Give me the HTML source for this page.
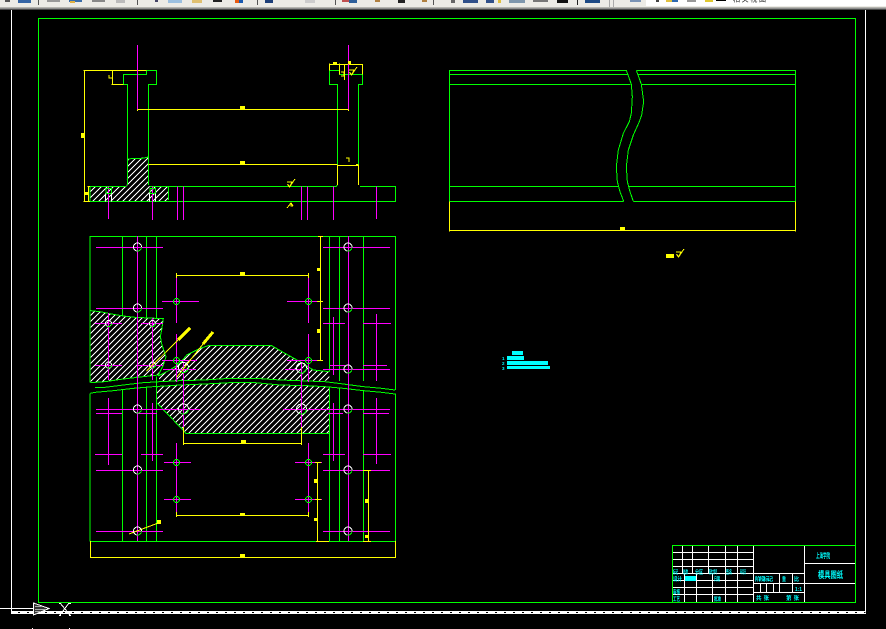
<!DOCTYPE html>
<html><head><meta charset="utf-8"><style>
html,body{margin:0;padding:0;background:#000;width:886px;height:629px;overflow:hidden}
svg{display:block;position:absolute;left:0;top:0}
.g,.y,.m,.w,.c{fill:none;stroke-width:1;shape-rendering:crispEdges}
.g{stroke:#0f0}.y{stroke:#ff0}.m{stroke:#f0f}.w{stroke:#fff}.c{stroke:#0ff}
.z *{vector-effect:non-scaling-stroke}
text{font-family:"Liberation Sans","Noto Sans CJK SC",sans-serif;font-weight:bold}
.yt{fill:#ff0;font-size:5px}
.ct{fill:#0ff;font-size:5.5px}
</style></head><body>
<svg width="886" height="629" viewBox="0 0 886 629" xmlns="http://www.w3.org/2000/svg">
<defs>
<pattern id="h" patternUnits="userSpaceOnUse" width="18" height="18"><path d="M-3 21L21 -3M-3 3L3 -3M15 21L21 15" stroke="#fff" stroke-width="3.400" fill="none" shape-rendering="crispEdges"/></pattern>
<g id="r"><path d="M0 0h5l-2.500 5-2-3M2.500 5L8 -3" fill="none" stroke="#ff0" shape-rendering="crispEdges"/></g>
</defs>
<rect width="886" height="629" fill="#000"/>

<!-- toolbar -->
<rect width="886" height="8" fill="#ecebe6"/>
<rect y="7" width="886" height="1" fill="#b5b5b0"/>
<rect y="8" width="886" height="1" fill="#8f8f8f"/>
<rect y="9" width="886" height="1" fill="#4a4a4a"/>
<rect x="646" width="240" height="6" fill="#fff"/>
<g>
<rect x="5" width="5" height="2" fill="#555"/>
<rect x="18" width="13" height="3" fill="#3565a5"/>
<rect x="38" width="1" height="5" fill="#555"/>
<rect x="47" width="13" height="2" fill="#999"/>
<rect x="69" width="13" height="2" fill="#3c6ea8"/><rect x="70" y="1" width="5" height="2" fill="#e0b040"/>
<rect x="92" width="13" height="2" fill="#888"/>
<rect x="116" width="9" height="3" fill="#bbb"/>
<rect x="137" width="1" height="5" fill="#555"/>
<rect x="155" width="3" height="2" fill="#446"/>
<rect x="168" width="14" height="3" fill="#9cc0e0"/>
<rect x="192" width="10" height="3" fill="#e0c070"/>
<rect x="213" width="9" height="2" fill="#222"/>
<rect x="235" width="4" height="3" fill="#e85a10"/><rect x="239" width="4" height="3" fill="#1a5ab0"/>
<rect x="257" width="1" height="5" fill="#555"/>
<rect x="265" width="8" height="3" fill="#1d3f78"/>
<rect x="305" width="10" height="3" fill="#ccc"/>
<rect x="335" width="1" height="5" fill="#555"/>
<rect x="342" width="7" height="2" fill="#c05050"/><rect x="349" width="8" height="3" fill="#2d5f9a"/>
<rect x="375" width="5" height="2" fill="#b08040"/>
<rect x="398" width="7" height="3" fill="#222"/>
<rect x="422" width="5" height="2" fill="#b08040"/>
<rect x="433" width="1" height="5" fill="#555"/>
<rect x="451" width="4" height="3" fill="#666"/>
<rect x="463" width="15" height="3" fill="#30508a"/>
<rect x="486" width="8" height="3" fill="#30508a"/><rect x="498" width="3" height="3" fill="#e0c040"/>
<rect x="509" width="16" height="3" fill="#7f97ad"/>
<rect x="533" width="15" height="2" fill="#777"/>
<rect x="557" width="11" height="3" fill="#111"/>
<rect x="577" width="1" height="5" fill="#222"/>
<rect x="585" width="15" height="3" fill="#1d4a85"/>
<rect x="609" width="1" height="7" fill="#aaa"/><rect x="613" width="1" height="7" fill="#aaa"/>
<rect x="630" width="11" height="2" fill="#7a93b5"/>
<rect x="656" width="3" height="2" fill="#444"/>
<rect x="666" width="6" height="2" fill="#e0c040"/><rect x="672" width="6" height="2" fill="#2f6ab0"/>
<rect x="687" width="9" height="2" fill="#999"/>
<rect x="705" width="8" height="2" fill="#e0c830"/>
<rect x="716" width="10" height="1" fill="#000"/>
<text x="733" y="1.500" font-size="7" fill="#111" textLength="33" style="font-weight:normal">相关视图</text>
</g>

<!-- frames -->
<path class="w" d="M11.500 10V612.500M865.500 10V612.500M0 608.500H33"/>
<path d="M11 611.500H866M11 613.500H866" stroke="#fff" fill="none" shape-rendering="crispEdges"/>
<path d="M11 612.500H866" stroke="#fff" stroke-dasharray="7 2" fill="none" shape-rendering="crispEdges"/>
<path class="g" d="M38.500 602.500V18.500H855.500V602.500Z"/>
<path d="M33.500 603V615L49 608.500Z" fill="#333" stroke="#fff" shape-rendering="crispEdges"/>
<path d="M35 606.500h6M35 609.500h11M35 611.500h5" stroke="#aaa" fill="none" shape-rendering="crispEdges"/>
<path class="w" d="M60 603L70 615M69 603L60 615M59 615.500h2M69 615.500h2M59 603.500h2M69 603.500h2"/>
<path class="w" d="M32 628.500h1M69 628.500h1"/>

<!-- top-left view -->
<g transform="translate(60 30) scale(.33333)">
<polygon points="203,388 217,385 265,381 268,469 325,469 325,514 90,514 90,469 200,469" fill="url(#h)"/>
<g class="z">
<path class="g" d="M203 388L217 385H247L265 381"/>
<path class="g" d="M90 469H200M270 469H828L832 465M900 469H1006V514H90V469M325 469V510"/>
<path class="g" d="M260 121H290V163H265V465M260 121V133H190V163H203V465"/>
<path class="g" d="M808 121V163H832V405M808 121H838V133H908V163H895V405"/>
<path class="y" d="M70 121H260M73 121V514M70 514H90M157 121V163M155 163H190M82 469H90M85 469V514"/>
<path class="y" d="M832 405V465M895 405V465M808 100V121M808 103H908V133M838 100V133M853 105V150"/>
<path class="y" d="M232 238H865M265 403H832M832 406H895M888 403H895M232 234V243M865 234V243"/>
<path class="m" d="M232 45V238M865 45V238M145 470V567M277 470V570M352 470V570M370 470V570M724 470V570M742 470V570M820 470V570M949 470V567"/>
<path class="g" d="M138 476H154V490H138ZM270 476H286V490H270Z"/>
<path class="w" d="M136 490V514M155 490V514M268 490V514M287 490V514"/>
</g></g>
<g>
<rect x="81" y="133" width="3" height="5" fill="#ff0"/>
<rect x="85" y="192" width="4" height="3" fill="#ff0"/>
<rect x="240" y="106" width="5" height="3" fill="#ff0"/>
<rect x="240" y="161" width="5" height="3" fill="#ff0"/>
<rect x="333" y="62" width="4" height="3" fill="#ff0"/>
<rect x="348" y="61" width="3" height="3" fill="#ff0"/>
<path d="M109 75v3h3M341 72h3v4h-3M346 158h3v4" stroke="#ff0" fill="none" shape-rendering="crispEdges"/>
<use href="#r" x="287" y="182"/>
<use href="#r" x="349" y="70"/>
<path d="M287 208l4-5 2 3M291 203v3h2" stroke="#ff0" fill="none" shape-rendering="crispEdges"/>
</g>

<!-- top-right view -->
<g transform="translate(440 60) scale(.33333)"><g class="z">
<path class="g" d="M559 31H28V424H551M563 43H28M572 73H28M535 379H28"/>
<path class="g" d="M589 31H1067V424H580M595 43H1067M603 73H1067M567 379H1067"/>
<path class="g" d="M559 31L566 50L574 73L577 110L574 160L568 185L550 220L535 270L529 320L532 365L540 395L551 424"/>
<path class="g" d="M589 31L596 50L604 73L611 125L605 165L598 185L580 225L565 270L559 320L562 365L570 395L580 424"/>
<path class="y" d="M28 424V515M1067 424V515M28 511H1067"/>
</g></g>
<rect x="620" y="227" width="5" height="3" fill="#ff0"/>
<rect x="666" y="254" width="8" height="4" fill="#ff0"/>
<use href="#r" x="676" y="252"/>

<!-- plan view -->
<g transform="translate(80 230) scale(.33333)">
<polygon points="32,242 60,245 95,252 130,258 165,262 250,266 245,300 241,320 246,345 258,380 250,405 235,435 190,440 130,447 75,455 32,458" fill="url(#h)"/>
<polygon points="235,438 270,420 300,400 320,375 360,355 385,347 575,347 615,370 660,395 700,420 748,425 748,452 680,453 600,450 525,445 450,445 375,450 300,452 240,455" fill="url(#h)"/>
<polygon points="230,470 300,465 375,462 450,458 525,458 600,465 680,467 748,472 748,610 318,610 232,520" fill="url(#h)"/>
<g class="z">
<path class="g" d="M30 458V19H946V480M946 490V934M30 490V934M30 934H946"/>
<path class="g" d="M127 19V258M199 19V262M229 19V265M748 19V425M778 19V453M851 19V453"/>
<path class="g" d="M127 480V934M199 470V934M229 440V934M748 470V934M778 475V934M851 482V934"/>
<path class="g" d="M32 242L60 245L95 252L130 258L165 262L250 266L245 300L241 320L246 345L258 380L250 405L235 435L190 440L130 447L75 455L32 458"/>
<path class="g" d="M235 438L270 420L300 400L320 375L360 355L385 347H575L615 370L660 395L700 420L748 425"/>
<path class="g" d="M240 455L300 452L375 450L450 445H525L600 450L680 453L735 455L790 462L850 470L905 475L945 480"/>
<path class="g" d="M30 490L45 487L100 482L160 475L220 470L300 465L375 462L450 458H525L600 465L680 467L735 470L790 475L850 482L905 487L945 492"/>
<path class="g" d="M45 473L75 472L130 465L190 458L240 455"/>
<path class="g" d="M232 520L318 610H748V470"/>
</g></g>

<path class="m" d="M137.500 236V541M348.500 236V541
M96 247.500H163M323 247.500H390M96 308.500H163M323 308.500H390M323 369.500H390M96 409.500H200M283 409.500H390M96 470.500H163M323 470.500H390M96 531.500H163M323 531.500H390
M108.500 313V380M152.500 318V380M95 323.500H122M141 323.500H163M95 365.500H122M137 365.500H163
M108.500 398V465M152.500 403V461M96 413.500H122M138 413.500H157M95 454.500H122M141 454.500H163
M333.500 317V375M376.500 314V381M323 323.500H345M363 323.500H391M330 365.500H345M363 365.500H387
M333.500 403V461M376.500 398V464M328 413.500H343M363 413.500H389M323 454.500H345M363 454.500H391
M176.500 275V323M176.500 334V382M308.500 275V323M308.500 334V382M162 301.500H199M287 301.500H323M162 360.500H197M287 360.500H320
M163 369.500H196M183.500 362V427M301.500 362V427M285 369.500H300
M176.500 443V515M308.500 443V515M164 462.500H191M295 462.500H322M164 499.500H191M295 499.500H322"/>

<path class="y" d="M176 275.500H309M176.500 273V278M308.500 273V278M320.500 236V361M318 236.500H323M317 301.500H323M317 360.500H323
M183.500 427V445M301.500 427V445M183 443.500H302M176 515.500H309M176.500 512V517M308.500 512V517
M317.500 462V541.500M315 462.500H321M315 499.500H321M316 541.500H329M368.500 470V541.500M363 470.500H371M363 541.500H371
M90.500 541V558M395.500 541V558M90 557.500H396"/>
<path d="M146.500 371L178 340M177 377L203 344M129 534L161 522" stroke="#ff0" fill="none" shape-rendering="crispEdges"/>
<path d="M178 340L190 328M203 344L213 332" stroke="#ff0" stroke-width="3" fill="none" shape-rendering="crispEdges"/>
<g fill="#ff0">
<rect x="240" y="272" width="5" height="3"/><rect x="317" y="268" width="3" height="3"/><rect x="317" y="329" width="3" height="4"/>
<rect x="241" y="440" width="5" height="3"/><rect x="240" y="513" width="5" height="2"/><rect x="314" y="479" width="3" height="4"/><rect x="314" y="518" width="3" height="3"/>
<rect x="365" y="499" width="3" height="4"/><rect x="365" y="535" width="3" height="3"/><rect x="240" y="554" width="5" height="3"/>
<rect x="157" y="520" width="4" height="4"/>
</g>

<!-- holes -->
<g fill="none" shape-rendering="crispEdges">
<g stroke="#fff">
<circle cx="137.500" cy="247" r="4"/><circle cx="137.500" cy="308" r="4"/><circle cx="137.500" cy="409" r="4"/><circle cx="137.500" cy="470" r="4"/><circle cx="137.500" cy="531" r="4"/>
<circle cx="348" cy="247" r="4"/><circle cx="348" cy="308" r="4"/><circle cx="348" cy="369" r="4"/><circle cx="348" cy="409" r="4"/><circle cx="348" cy="470" r="4"/><circle cx="348" cy="531" r="4"/>
<circle cx="108.500" cy="323.500" r="3"/><circle cx="108.500" cy="365" r="3"/><circle cx="152.500" cy="323.500" r="3"/><circle cx="152.500" cy="365" r="3"/>
<circle cx="183.500" cy="367.500" r="5"/><circle cx="301.500" cy="368" r="5"/><circle cx="183.500" cy="409" r="5"/><circle cx="301.500" cy="409" r="5"/>
</g>
<g stroke="#0f0" stroke-dasharray="7 20">
<circle cx="137.500" cy="247" r="4"/><circle cx="137.500" cy="308" r="4"/><circle cx="137.500" cy="409" r="4"/><circle cx="137.500" cy="470" r="4"/><circle cx="137.500" cy="531" r="4"/>
<circle cx="348" cy="247" r="4"/><circle cx="348" cy="308" r="4"/><circle cx="348" cy="369" r="4"/><circle cx="348" cy="409" r="4"/><circle cx="348" cy="470" r="4"/><circle cx="348" cy="531" r="4"/>
</g>
<g stroke="#0f0">
<circle cx="176.500" cy="301.500" r="3"/><circle cx="308.500" cy="301.500" r="3"/><circle cx="176.500" cy="360.500" r="3"/><circle cx="308.500" cy="360.500" r="3"/>
<circle cx="176.500" cy="462.500" r="3"/><circle cx="308.500" cy="462.500" r="3"/><circle cx="176.500" cy="499.500" r="3"/><circle cx="308.500" cy="499.500" r="3"/>
<circle cx="108.500" cy="323.500" r="3" stroke-dasharray="6 13"/><circle cx="108.500" cy="365" r="3" stroke-dasharray="6 13"/><circle cx="152.500" cy="323.500" r="3" stroke-dasharray="6 13"/><circle cx="152.500" cy="365" r="3" stroke-dasharray="6 13"/>
<circle cx="183.500" cy="367.500" r="5" stroke-dasharray="10 21"/><circle cx="301.500" cy="368" r="5" stroke-dasharray="10 21"/><circle cx="183.500" cy="409" r="5" stroke-dasharray="10 21"/><circle cx="301.500" cy="409" r="5" stroke-dasharray="10 21"/>
</g>
</g>

<!-- notes -->
<g fill="#0ff">
<rect x="512" y="351" width="11" height="4"/><rect x="507" y="356" width="17" height="4"/><rect x="507" y="361" width="41" height="4"/><rect x="507" y="366" width="43" height="3"/>
<text x="502" y="360" font-size="4.500">1</text><text x="502" y="365" font-size="4.500">2</text><text x="502" y="370" font-size="4.500">3</text>
</g>

<!-- title block -->
<g transform="translate(660 535) scale(.33333)"><g class="z">
<path class="w" d="M37 52H281M37 73H281M37 94H281M37 115H281M37 136H281M37 157H281M37 178H281
M67 31V115M97 31V115M145 31V115M196 31V115M232 31V115
M73 115V203M109 115V203M157 115V203M196 115V203M232 115V203
M281 31V203M433 31V203M281 115H433M281 145H433M281 172H433M358 115V172M397 115V172M301 145V172M320 145V172M340 145V172
M433 85H586M433 145H586"/>
<path class="g" d="M37 203V31H586V203"/>
<path class="g" d="M0 203H586"/>
</g></g>
<g class="ct">
<text x="673" y="574" textLength="5" lengthAdjust="spacingAndGlyphs">标记</text>
<text x="683" y="574" textLength="5" lengthAdjust="spacingAndGlyphs">处数</text>
<text x="695" y="574" textLength="8" lengthAdjust="spacingAndGlyphs">分区</text>
<text x="709" y="574" textLength="8" lengthAdjust="spacingAndGlyphs">更改文件号</text>
<text x="726" y="574" textLength="6" lengthAdjust="spacingAndGlyphs">签名</text>
<text x="740" y="574" textLength="6" lengthAdjust="spacingAndGlyphs">年月日</text>
<text x="673" y="581" textLength="9" lengthAdjust="spacingAndGlyphs">设计</text>
<rect x="685" y="576" width="11" height="5" fill="#0ff"/>
<text x="714" y="581" textLength="6" lengthAdjust="spacingAndGlyphs">日期</text>
<text x="673" y="594" textLength="7" lengthAdjust="spacingAndGlyphs">审核</text>
<text x="673" y="601" textLength="7" lengthAdjust="spacingAndGlyphs">工艺</text>
<text x="714" y="601" textLength="7" lengthAdjust="spacingAndGlyphs">批准</text>
<text x="755" y="581" textLength="18" lengthAdjust="spacing">阶段标记</text>
<text x="782" y="581" textLength="4" lengthAdjust="spacingAndGlyphs">重</text>
<text x="794" y="581" textLength="5" lengthAdjust="spacingAndGlyphs">比</text>
<text x="795" y="591" textLength="7" lengthAdjust="spacingAndGlyphs">1:1</text>
<text x="756" y="600" textLength="13" lengthAdjust="spacing">共 张</text>
<text x="786" y="600" textLength="13" lengthAdjust="spacing">第 张</text>
<text x="816" y="558" font-size="7" textLength="14" lengthAdjust="spacingAndGlyphs">上海学院</text>
<text x="818" y="578" font-size="9" textLength="25" lengthAdjust="spacingAndGlyphs">模具图纸</text>
</g>
</svg>
</body></html>
